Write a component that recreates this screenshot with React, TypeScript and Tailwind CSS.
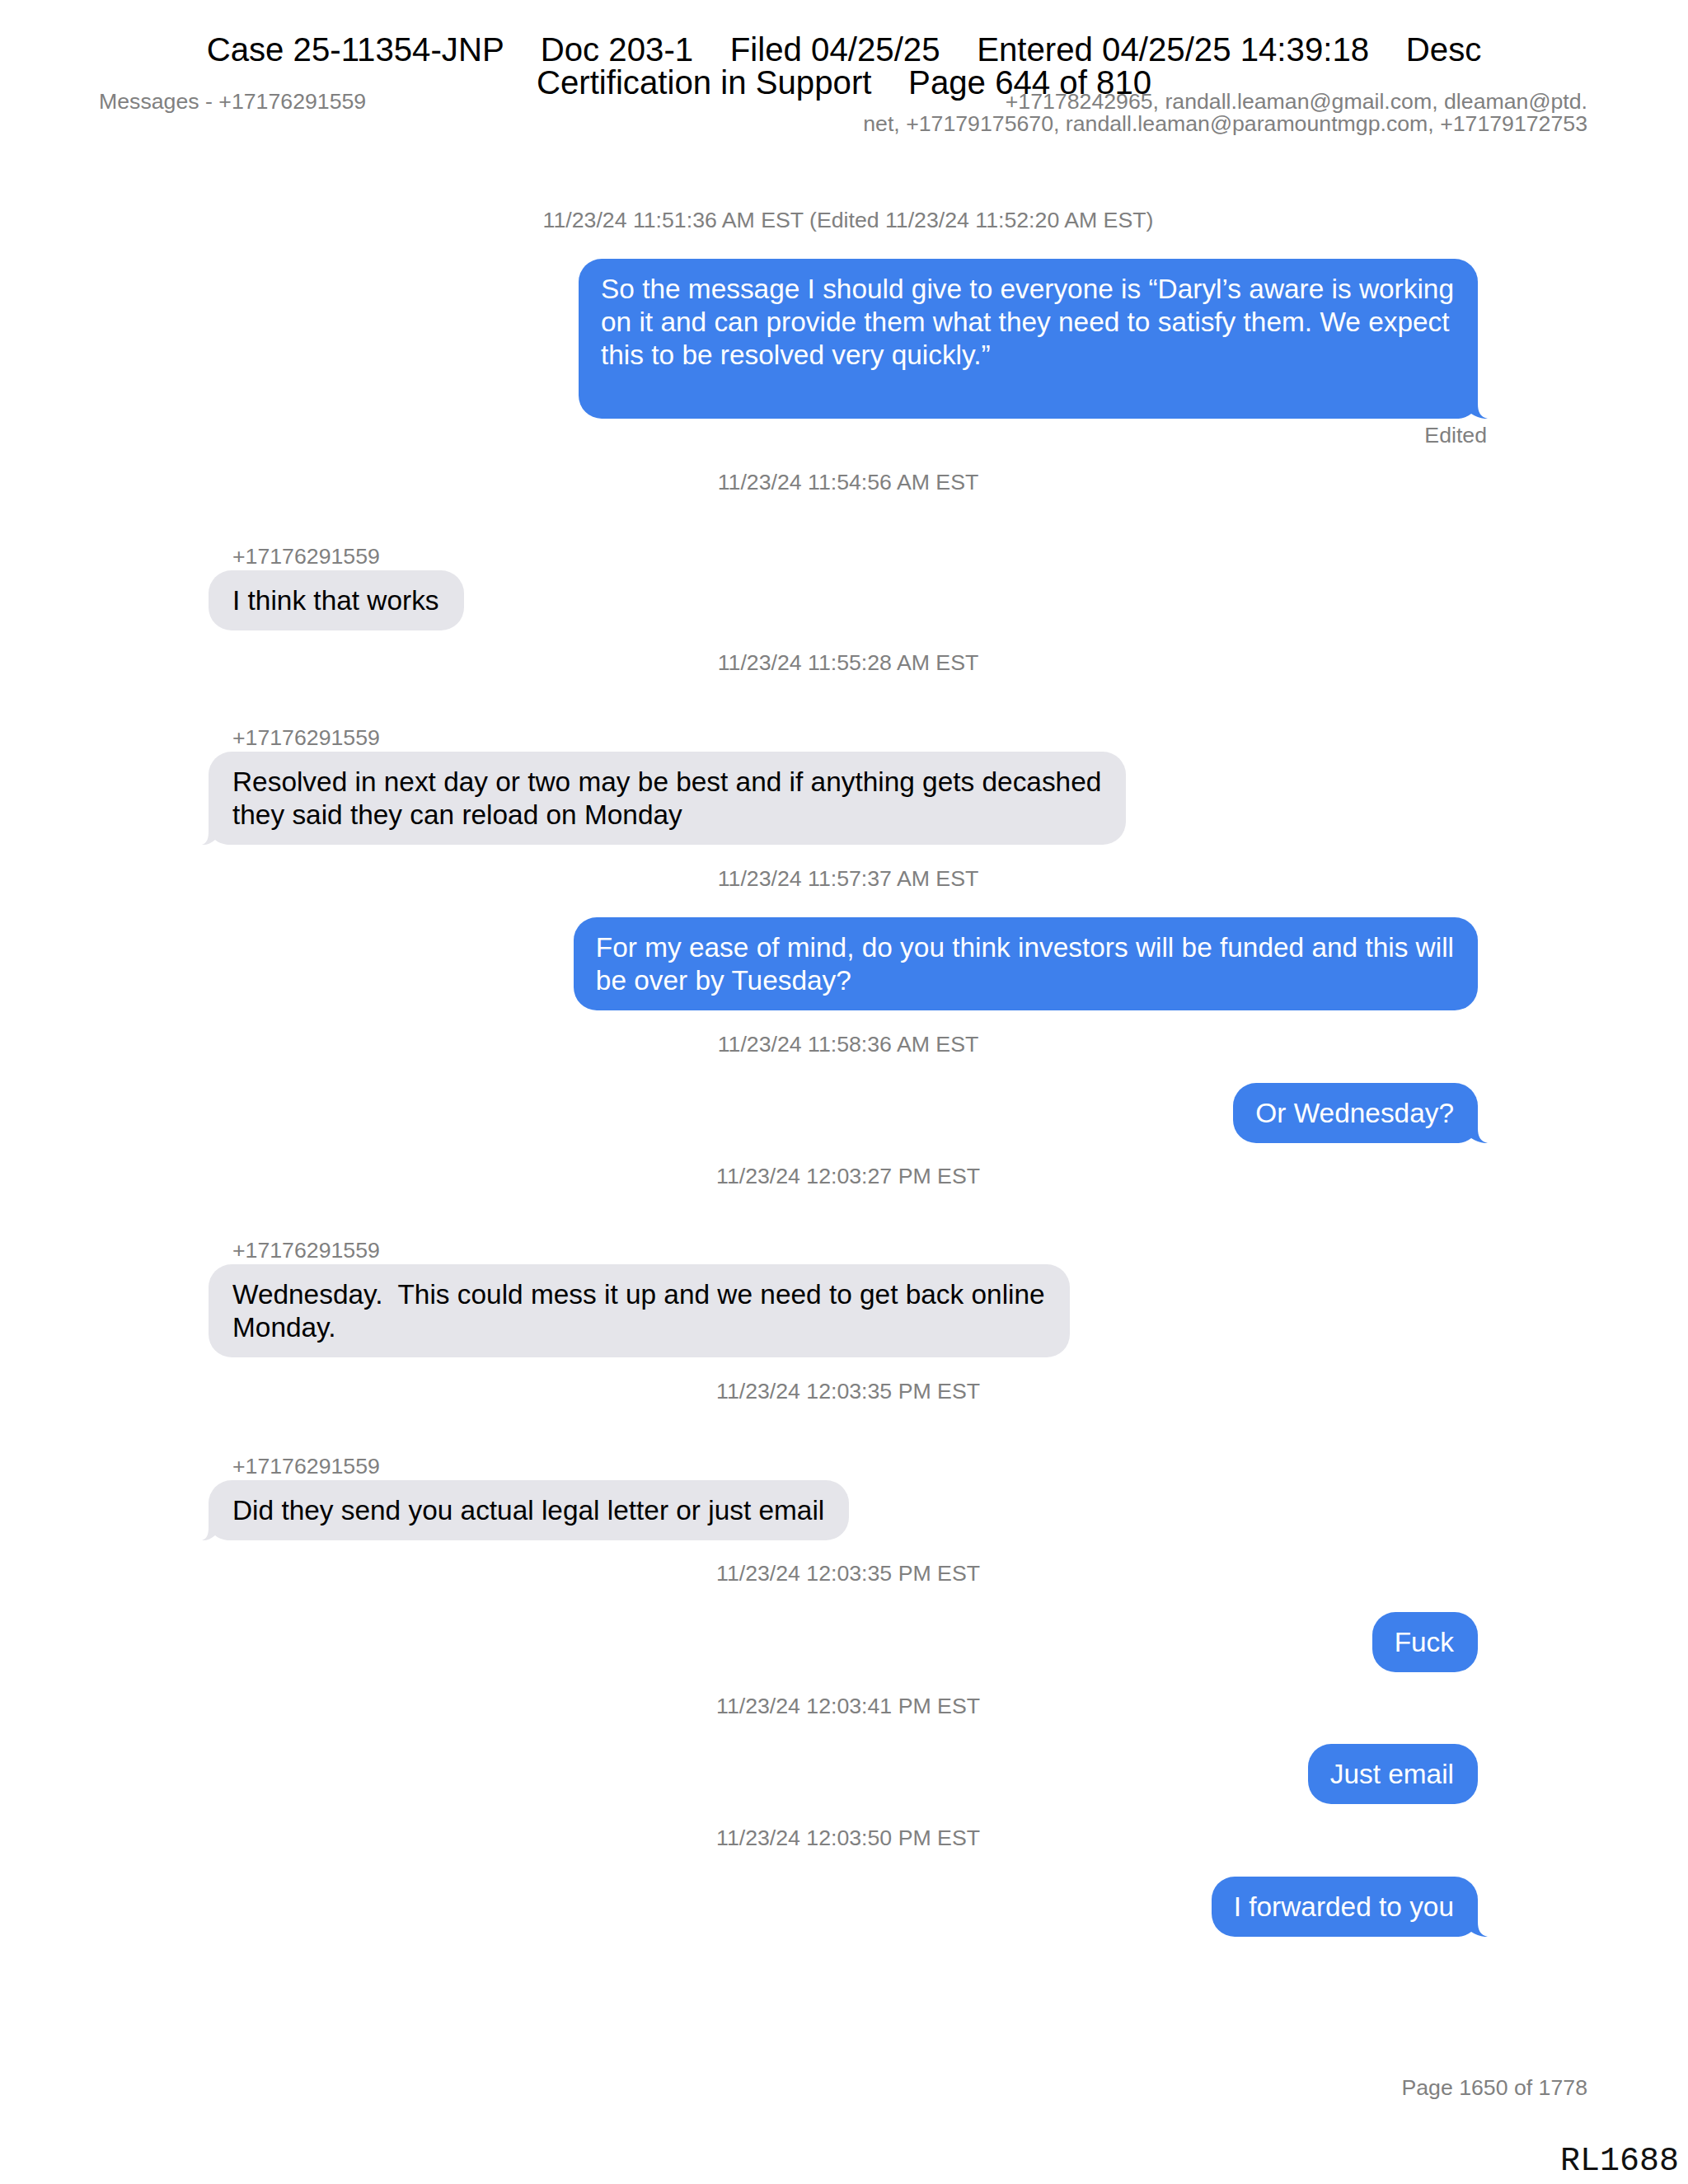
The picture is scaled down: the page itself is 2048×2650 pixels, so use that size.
import React from "react";

function BlueTail() {
  return (
    <svg className="absolute bottom-0 right-[-12px] w-[40px] h-[28px]" viewBox="0 0 40 28" fill="#3e80ec">
      <path d="M0 0 H28 V10 C28 20 31 26 40 28 C33 28.5 26 26 20 22 C15 26 9 28 0 28 Z" />
    </svg>
  );
}

function GrayTail() {
  return (
    <svg className="absolute bottom-0 left-[-8px] w-[36px] h-[28px]" viewBox="0 0 36 28" fill="#e5e5ea">
      <path d="M36 0 H8 V12 C8 21 6 26 0 28 C6 28.5 11 26 16 22 C21 26 27 28 36 28 Z" />
    </svg>
  );
}

function Stamp({ text, mt }: { text: string; mt: string }) {
  return <div className={`text-center text-[26.7px] leading-[30px] text-[#808080] ${mt}`}>{text}</div>;
}

function Sender({ mt }: { mt: string }) {
  return <div className={`ml-[29px] text-[26.7px] leading-[30px] text-[#808080] ${mt}`}>+17176291559</div>;
}

function Blue({ lines, tail, mt, extra }: { lines: string[]; tail?: boolean; mt: string; extra?: string }) {
  return (
    <div
      className={`self-end mr-[12px] relative bg-[#3e80ec] text-white rounded-[28px] pl-[27px] pr-[29px] pt-[17px] text-[33.4px] leading-[40px] ${extra ?? "pb-[16px]"} ${mt}`}
    >
      {lines.map((l, i) => (
        <span key={i} className="block whitespace-pre relative z-10">
          {l}
        </span>
      ))}
      {tail && <BlueTail />}
    </div>
  );
}

function Gray({ lines, tail, mt }: { lines: string[]; tail?: boolean; mt: string }) {
  return (
    <div
      className={`self-start relative bg-[#e5e5ea] text-black rounded-[28px] pl-[29px] pr-[30px] pt-[17px] pb-[16px] text-[33.4px] leading-[40px] ${mt}`}
    >
      {lines.map((l, i) => (
        <span key={i} className="block whitespace-pre relative z-10">
          {l}
        </span>
      ))}
      {tail && <GrayTail />}
    </div>
  );
}

export default function App() {
  return (
    <div className="relative w-[2048px] h-[2650px] overflow-hidden bg-white font-['Liberation_Sans',Arial,sans-serif]">
      <div className="flex justify-between pt-[110px] pl-[120px] pr-[122px] text-[26.7px] leading-[27px] text-[#808080]">
        <div>Messages - +17176291559</div>
        <div className="text-right">
          +17178242965, randall.leaman@gmail.com, dleaman@ptd.
          <br />
          net, +17179175670, randall.leaman@paramountmgp.com, +17179172753
        </div>
      </div>

      <div className="flex flex-col ml-[253px] w-[1552px]">
        <Stamp text="11/23/24 11:51:36 AM EST (Edited 11/23/24 11:52:20 AM EST)" mt="mt-[88px]" />
        <Blue
          mt="mt-[32px]"
          tail
          extra="pb-[57px]"
          lines={[
            "So the message I should give to everyone is \u201cDaryl\u2019s aware is working",
            "on it and can provide them what they need to satisfy them. We expect",
            "this to be resolved very quickly.\u201d",
          ]}
        />
        <div className="self-end mr-[1px] mt-[5px] text-[26.7px] leading-[30px] text-[#808080]">Edited</div>

        <Stamp text="11/23/24 11:54:56 AM EST" mt="mt-[27px]" />
        <Sender mt="mt-[60px]" />
        <Gray mt="mt-[2px]" lines={["I think that works"]} />

        <Stamp text="11/23/24 11:55:28 AM EST" mt="mt-[24px]" />
        <Sender mt="mt-[61px]" />
        <Gray
          mt="mt-[2px]"
          tail
          lines={[
            "Resolved in next day or two may be best and if anything gets decashed",
            "they said they can reload on Monday",
          ]}
        />

        <Stamp text="11/23/24 11:57:37 AM EST" mt="mt-[26px]" />
        <Blue
          mt="mt-[32px]"
          lines={[
            "For my ease of mind, do you think investors will be funded and this will",
            "be over by Tuesday?",
          ]}
        />

        <Stamp text="11/23/24 11:58:36 AM EST" mt="mt-[26px]" />
        <Blue mt="mt-[32px]" tail lines={["Or Wednesday?"]} />

        <Stamp text="11/23/24 12:03:27 PM EST" mt="mt-[25px]" />
        <Sender mt="mt-[60px]" />
        <Gray
          mt="mt-[2px]"
          lines={["Wednesday.  This could mess it up and we need to get back online", "Monday."]}
        />

        <Stamp text="11/23/24 12:03:35 PM EST" mt="mt-[26px]" />
        <Sender mt="mt-[61px]" />
        <Gray mt="mt-[2px]" tail lines={["Did they send you actual legal letter or just email"]} />

        <Stamp text="11/23/24 12:03:35 PM EST" mt="mt-[25px]" />
        <Blue mt="mt-[32px]" lines={["Fuck"]} />

        <Stamp text="11/23/24 12:03:41 PM EST" mt="mt-[26px]" />
        <Blue mt="mt-[31px]" lines={["Just email"]} />

        <Stamp text="11/23/24 12:03:50 PM EST" mt="mt-[26px]" />
        <Blue mt="mt-[32px]" tail lines={["I forwarded to you"]} />
      </div>

      <div className="mt-[168px] pr-[122px] text-right text-[26.7px] leading-[30px] text-[#808080]">
        Page 1650 of 1778
      </div>
      <div className="mt-[55px] pr-[11px] text-right text-[40px] leading-[40px] text-[#111] font-['Liberation_Mono','Courier_New',monospace]">
        RL1688
      </div>

      <div className="absolute top-[41px] left-0 right-0 z-20 text-center text-[40.2px] leading-[40px] text-black whitespace-pre">
        <div>Case 25-11354-JNP    Doc 203-1    Filed 04/25/25    Entered 04/25/25 14:39:18    Desc</div>
        <div>Certification in Support    Page 644 of 810</div>
      </div>
    </div>
  );
}
